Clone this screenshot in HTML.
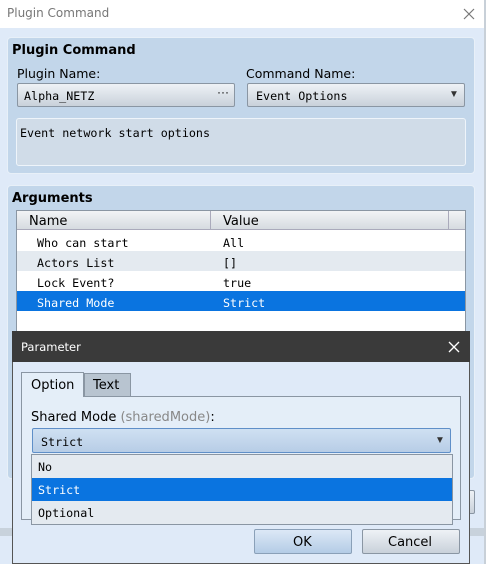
<!DOCTYPE html>
<html><head><style>
*{box-sizing:border-box;margin:0;padding:0}
body{width:486px;height:564px;position:relative;overflow:hidden;background:#dfeaf8;font-family:"Liberation Sans",sans-serif;font-size:13px;color:#000}
.a{position:absolute}
.mono{font-family:"DejaVu Sans Mono","Liberation Mono",monospace;font-size:11.7px;margin-top:1px}
.sans{font-family:"DejaVu Sans","Liberation Sans",sans-serif}
.btn{background:linear-gradient(#eef2f6,#c9d1da);border:1px solid #8a96a3;border-radius:2px}
</style></head><body>
<div class="a" style="left:0;top:0;width:484px;height:28px;background:#fff"></div>
<div class="a sans" style="left:7px;top:6px;font-size:12px;color:#777">Plugin Command</div>
<svg class="a" style="left:463px;top:8px" width="12" height="12"><path d="M1 1L11 11M11 1L1 11" stroke="#777" stroke-width="1.2"/></svg>
<div class="a" style="left:484px;top:0;width:2px;height:564px;background:#c8d0d8"></div>

<div class="a" style="left:7px;top:37px;width:468px;height:137px;background:#c2d6ea;border:1px solid #e8f0f8;border-radius:4px"></div>
<div class="a sans" style="left:12px;top:43px;font-weight:bold">Plugin Command</div>
<div class="a sans" style="left:17px;top:66px;font-size:12.5px">Plugin Name:</div>
<div class="a sans" style="left:246px;top:66px;font-size:12.5px">Command Name:</div>
<div class="a btn" style="left:17px;top:83px;width:218px;height:24px"></div>
<div class="a mono" style="left:24px;top:88px">Alpha_NETZ</div>
<div class="a" style="left:217px;top:85px;font-size:12px">···</div>
<div class="a btn" style="left:247px;top:83px;width:218px;height:24px"></div>
<div class="a mono" style="left:256px;top:88px">Event Options</div>
<div class="a" style="left:449px;top:89px;font-size:10px;color:#333">▼</div>
<div class="a" style="left:16px;top:118px;width:450px;height:48px;background:#d0dce8;border:1px solid #eef4fa;border-radius:3px"></div>
<div class="a mono" style="left:20px;top:125px">Event network start options</div>

<div class="a" style="left:7px;top:185px;width:468px;height:294px;background:#c2d6ea;border:1px solid #e8f0f8;border-radius:4px"></div>
<div class="a sans" style="left:12px;top:191px;font-weight:bold">Arguments</div>
<div class="a" style="left:16px;top:210px;width:450px;height:150px;background:#fff;border:1px solid #8a96a3"></div>
<div class="a" style="left:17px;top:211px;width:448px;height:19px;background:linear-gradient(#f2f4f6,#d6dbe0);border-bottom:1px solid #aab"></div>
<div class="a" style="left:210px;top:211px;width:1px;height:19px;background:#aab"></div>
<div class="a" style="left:448px;top:211px;width:1px;height:19px;background:#aab"></div>
<div class="a sans" style="left:29px;top:214px">Name</div>
<div class="a sans" style="left:223px;top:214px">Value</div>
<div class="a" style="left:17px;top:251px;width:448px;height:20px;background:#e4eaf0"></div>
<div class="a" style="left:17px;top:291px;width:448px;height:20px;background:#0a74e0"></div>
<div class="a mono" style="left:37px;top:235px">Who can start</div><div class="a mono" style="left:223px;top:235px">All</div>
<div class="a mono" style="left:37px;top:255px">Actors List</div><div class="a mono" style="left:223px;top:255px">[]</div>
<div class="a mono" style="left:37px;top:275px">Lock Event?</div><div class="a mono" style="left:223px;top:275px">true</div>
<div class="a mono" style="left:37px;top:295px;color:#fff">Shared Mode</div><div class="a mono" style="left:223px;top:295px;color:#fff">Strict</div>
<div class="a btn" style="left:460px;top:490px;width:15px;height:24px"></div>
<div class="a" style="left:0;top:528px;width:484px;height:8px;background:#c8d2dc"></div>

<div class="a" style="left:12px;top:331px;width:458px;height:233px;background:#dfeaf8;border:1px solid #555"></div>
<div class="a" style="left:12px;top:331px;width:458px;height:31px;background:#3a3a3a"></div>
<div class="a sans" style="left:21px;top:340px;font-size:11.5px;color:#fff">Parameter</div>
<svg class="a" style="left:448px;top:341px" width="12" height="12"><path d="M1 1L11 11M11 1L1 11" stroke="#fff" stroke-width="1.3"/></svg>
<div class="a" style="left:21px;top:396px;width:440px;height:124px;border:1px solid #8a96a3;background:#e4eef8"></div>
<div class="a" style="left:84px;top:373px;width:47px;height:23px;background:#b8c4d0;border:1px solid #8a96a3;border-bottom:none"></div>
<div class="a sans" style="left:93px;top:378px">Text</div>
<div class="a" style="left:21px;top:372px;width:63px;height:25px;background:#e4eef8;border:1px solid #8a96a3;border-bottom:none"></div>
<div class="a sans" style="left:31px;top:378px">Option</div>
<div class="a sans" style="left:31px;top:410px">Shared Mode <span style="color:#888">(sharedMode)</span>:</div>
<div class="a" style="left:32px;top:428px;width:419px;height:25px;background:linear-gradient(#cfe0f2,#b7cde6);border:1px solid #5f8fc8;border-radius:2px"></div>
<div class="a mono" style="left:41px;top:434px">Strict</div>
<div class="a" style="left:435px;top:435px;font-size:10px;color:#333">▼</div>
<div class="a" style="left:31px;top:454px;width:422px;height:71px;background:#e4eaf0;border:1px solid #8a96a3"></div>
<div class="a" style="left:32px;top:478px;width:420px;height:23px;background:#0a74e0"></div>
<div class="a mono" style="left:38px;top:459px">No</div>
<div class="a mono" style="left:38px;top:482px;color:#fff">Strict</div>
<div class="a mono" style="left:38px;top:505px">Optional</div>
<div class="a" style="left:254px;top:529px;width:98px;height:25px;background:linear-gradient(#dce8f6,#b4cce6);border:1px solid #8aa0b8;border-radius:2px"></div>
<div class="a sans" style="left:293px;top:535px">OK</div>
<div class="a btn" style="left:362px;top:529px;width:98px;height:25px"></div>
<div class="a sans" style="left:388px;top:535px">Cancel</div>
</body></html>
